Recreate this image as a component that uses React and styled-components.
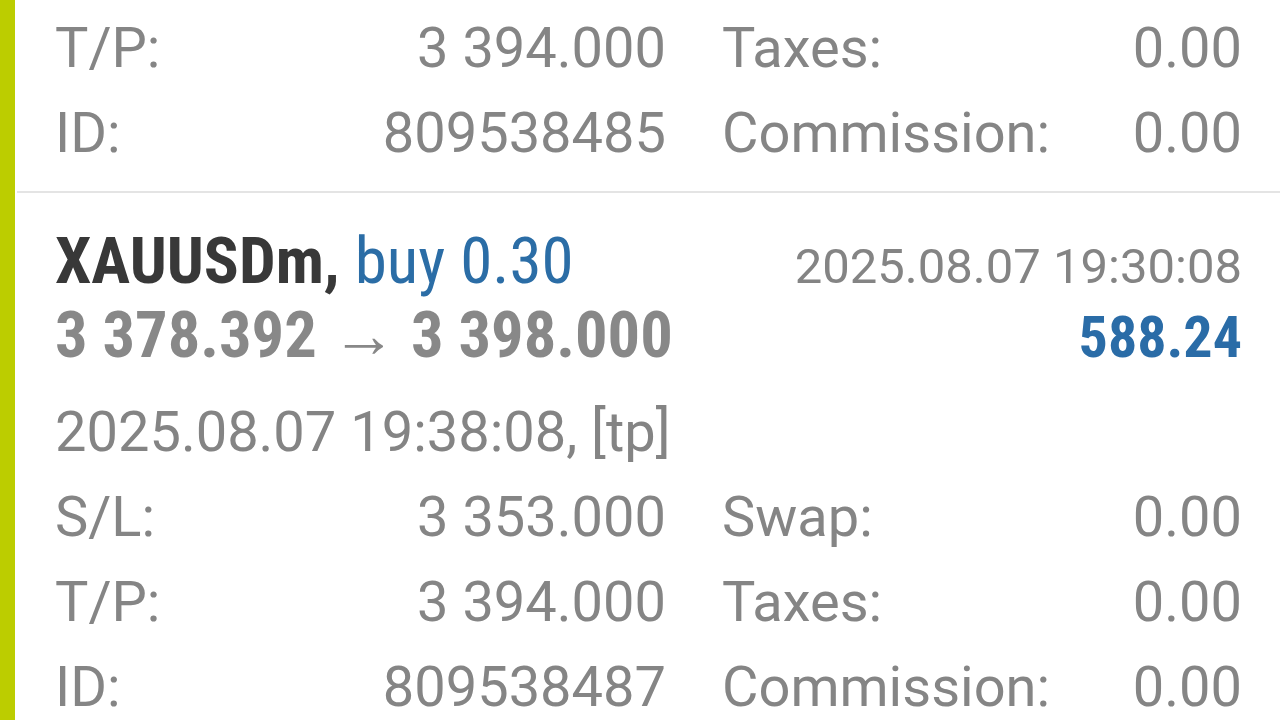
import React from "react";
import styled, { createGlobalStyle } from "styled-components";

const Global = createGlobalStyle`
  html, body { margin: 0; padding: 0; background: #ffffff; }
  body { width: 1280px; height: 720px; overflow: hidden; font-family: Roboto, "Liberation Sans", sans-serif; }
`;

const Page = styled.div`
  display: flex;
  width: 1280px;
  height: 720px;
  overflow: hidden;
  background: #fff;
`;

const AccentBar = styled.div`
  flex: 0 0 15px;
  background: #bccd00;
`;

const List = styled.div`
  flex: 1;
  display: flex;
  flex-direction: column;
`;

const Trade = styled.section`
  padding: ${(p) => p.$pad || "0"} 38px ${(p) => p.$padBottom || "0"} 38px;
  border-bottom: ${(p) => (p.$divider ? "2px solid #e4e4e4" : "none")};
  margin-left: 2px;
`;

const Line = styled.div`
  display: flex;
  justify-content: space-between;
  align-items: baseline;
  font-family: "Roboto Condensed", Roboto, sans-serif;
  height: ${(p) => p.$h}px;
  line-height: ${(p) => p.$h}px;
  white-space: nowrap;
`;

const Symbol = styled.span`
  font-size: 65px;
  font-weight: 700;
  color: #383838;
`;

const Side = styled.span`
  font-size: 65px;
  font-weight: 400;
  color: #2b6da6;
`;

const OpenTime = styled.span`
  font-family: Roboto, sans-serif;
  font-size: 49px;
  color: #848484;
`;

const Prices = styled.span`
  font-size: 64.5px;
  font-weight: 700;
  color: #888888;
`;

const Profit = styled.span`
  font-size: 58px;
  font-weight: 700;
  color: #2a6ca7;
`;

const CloseTime = styled.div`
  font-family: Roboto, sans-serif;
  font-size: 56px;
  color: #848484;
  line-height: 85px;
  height: 85px;
  margin-top: 17px;
  white-space: nowrap;
`;

const DetailRow = styled.div`
  display: grid;
  grid-template-columns: 611px 520px;
  column-gap: 56px;
  height: 85px;
  line-height: 85px;
  font-family: Roboto, sans-serif;
  font-size: 56px;
  color: #858585;
`;

const Pair = styled.div`
  display: flex;
  justify-content: space-between;
  white-space: nowrap;
`;

const details = (id) => [
  [["S/L:", "3 353.000"], ["Swap:", "0.00"]],
  [["T/P:", "3 394.000"], ["Taxes:", "0.00"]],
  [["ID:", id], ["Commission:", "0.00"]],
];

function Details({ rows }) {
  return rows.map((r, i) => (
    <DetailRow key={i}>
      {r.map(([k, v]) => (
        <Pair key={k}>
          <span>{k}</span>
          <span>{v}</span>
        </Pair>
      ))}
    </DetailRow>
  ));
}

export default function App() {
  return (
    <Page>
      <Global />
      <AccentBar />
      <List>
        <Trade $divider $pad="6px" $padBottom="15px">
          <Details rows={details("809538485").slice(1)} />
        </Trade>
        <Trade $pad="31px">
          <Line $h={74}>
            <span>
              <Symbol>XAUUSDm, </Symbol>
              <Side>buy 0.30</Side>
            </span>
            <OpenTime>2025.08.07 19:30:08</OpenTime>
          </Line>
          <Line $h={75}>
            <Prices>3 378.392 → 3 398.000</Prices>
            <Profit>588.24</Profit>
          </Line>
          <CloseTime>2025.08.07 19:38:08, [tp]</CloseTime>
          <Details rows={details("809538487")} />
        </Trade>
      </List>
    </Page>
  );
}
